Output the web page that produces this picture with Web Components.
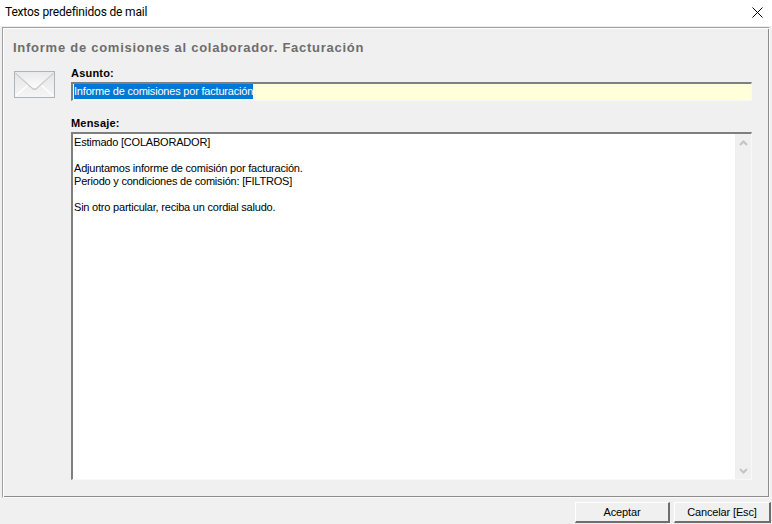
<!DOCTYPE html>
<html>
<head>
<meta charset="utf-8">
<title>Textos predefinidos de mail</title>
<style>
html, body { margin: 0; padding: 0; height: 100%; }
body { background: #f0f0f0; overflow: hidden; font-family: "Liberation Sans", Arial, sans-serif; }
</style>
</head>
<body>
<mail-dialog title-text="Textos predefinidos de mail">
    <mail-panel heading="Informe de comisiones al colaborador. Facturación">
        <mail-field label="Asunto:">
            <subject-input value="Informe de comisiones por facturación"></subject-input>
        </mail-field>
        <mail-field label="Mensaje:" grow>
            <message-box>Estimado [COLABORADOR]

Adjuntamos informe de comisión por facturación.
Periodo y condiciones de comisión: [FILTROS]

Sin otro particular, reciba un cordial saludo.</message-box>
        </mail-field>
    </mail-panel>
    <dlg-button slot="buttons" style="width:95px">Aceptar</dlg-button>
    <dlg-button slot="buttons" style="width:97px">Cancelar [Esc]</dlg-button>
</mail-dialog>
<script>
class MailDialog extends HTMLElement {
    constructor() {
        super();
        this.attachShadow({ mode: 'open' });
        this.shadowRoot.innerHTML = `
<style>
    :host { display: flex; flex-direction: column; width: 772px; height: 524px; background: #f0f0f0; }
    #titlebar {
        height: 26px; flex: none; background: #fff; display: flex; align-items: center;
        justify-content: space-between; padding: 0 9px 2px 5px; box-sizing: border-box;
        font: 12px Roboto, "Liberation Sans", sans-serif; letter-spacing: -.19px; color: #000;
    }
    #titlebar svg { display: block; }
    #body { flex: 1; display: flex; padding: 1px 2px 0 2px; min-height: 0; }
    #buttons { flex: none; height: 26px; display: flex; justify-content: flex-end; gap: 4px; padding: 0 1px 1px 0; align-items: flex-end; box-sizing: border-box; }
</style>
<div id="titlebar"><span></span>
    <svg width="11" height="11" viewBox="0 0 11 11"><path d="M.5.5l10 10M10.500.5l-10 10" stroke="#000" stroke-width="1" fill="none"/></svg>
</div>
<div id="body"><slot></slot></div>
<div id="buttons"><slot name="buttons"></slot></div>`;
    }
    connectedCallback() {
        this.shadowRoot.querySelector('#titlebar span').textContent = this.getAttribute('title-text');
    }
}
customElements.define('mail-dialog', MailDialog);

class MailPanel extends HTMLElement {
    constructor() {
        super();
        this.attachShadow({ mode: 'open' });
        this.shadowRoot.innerHTML = `
<style>
    :host {
        display: flex; flex-direction: column; flex: 1; min-width: 0; box-sizing: border-box;
        border: 1px solid #fafafa; border-top-color: #a0a0a0; border-left-color: #a0a0a0;
        box-shadow: inset 1px 1px 0 #fff, inset -1px -1px 0 #8c8c8c;
        padding: 12px 17px 17px 11px; background: #f0f0f0;
    }
    h1 { margin: 0 0 0 -1px; height: 18px; font: bold 13px/16px "Liberation Sans", sans-serif; letter-spacing: .74px; color: #6d6d6d; }
    #row { flex: 1; display: flex; min-height: 0; gap: 16px; margin-top: 9px; }
    svg { flex: none; display: block; margin-top: 4px; }
    #fields { flex: 1; display: flex; flex-direction: column; gap: 16px; min-width: 0; }
</style>
<h1></h1>
<div id="row">
    <svg width="41" height="27" viewBox="0 0 41 27">
        <defs>
            <linearGradient id="body" x1="0" y1="0" x2="0" y2="1"><stop offset="0" stop-color="#e6e6e6"/><stop offset="1" stop-color="#f5f5f5"/></linearGradient>
            <linearGradient id="flap" x1="0" y1="0" x2="0" y2="1"><stop offset="0" stop-color="#e9e9e9"/><stop offset="1" stop-color="#fcfcfc"/></linearGradient>
        </defs>
        <rect x=".5" y=".5" width="40" height="26" fill="url(#body)" stroke="#aeb4bb"/>
        <path d="M1.500 25L15 13M39.500 25L26 13" stroke="#fff" stroke-width="1.500" fill="none"/>
        <path d="M1.500 2L18 17Q20.500 19.500 23 17L39.500 2" stroke="#c9cccf" stroke-width="1.500" fill="none"/>
        <path d="M1 1L18 16Q20.500 18 23 16L40 1Z" fill="url(#flap)"/>
    </svg>
    <div id="fields"><slot></slot></div>
</div>`;
    }
    connectedCallback() {
        this.shadowRoot.querySelector('h1').textContent = this.getAttribute('heading');
    }
}
customElements.define('mail-panel', MailPanel);

class MailField extends HTMLElement {
    constructor() {
        super();
        this.attachShadow({ mode: 'open' });
        this.shadowRoot.innerHTML = `
<style>
    :host { display: flex; flex-direction: column; min-height: 0; }
    :host([grow]) { flex: 1; }
    label { height: 15px; flex: none; font: bold 11px/13px "Liberation Sans", sans-serif; color: #000; letter-spacing: .2px; }
</style>
<label></label>
<slot></slot>`;
    }
    connectedCallback() {
        this.shadowRoot.querySelector('label').textContent = this.getAttribute('label');
    }
}
customElements.define('mail-field', MailField);

class SubjectInput extends HTMLElement {
    constructor() {
        super();
        this.attachShadow({ mode: 'open' });
        this.shadowRoot.innerHTML = `
<style>
    :host {
        display: block; height: 19px; box-sizing: border-box; background: #ffffd9;
        border: 1px solid #f8f8f8; border-top: 2px solid #7f7f7f; border-left: 2px solid #7f7f7f;
        padding-left: 1px; font: 11px/15px "Liberation Sans", sans-serif; letter-spacing: -.2px;
    }
    span { display: inline-block; height: 15px; background: #0078d7; color: #fff; white-space: nowrap; }
</style>
<span></span>`;
    }
    connectedCallback() {
        this.shadowRoot.querySelector('span').textContent = this.getAttribute('value');
    }
}
customElements.define('subject-input', SubjectInput);

class MessageBox extends HTMLElement {
    constructor() {
        super();
        this.attachShadow({ mode: 'open' });
        this.shadowRoot.innerHTML = `
<style>
    :host {
        display: flex; flex: 1; min-height: 0; box-sizing: border-box; background: #fff;
        border: 1px solid #f8f8f8; border-top: 2px solid #7f7f7f; border-left: 2px solid #7f7f7f;
    }
    #text {
        flex: 1; padding: 2px 0 0 1px; white-space: pre-wrap; color: #000;
        font: 11px/13px "Liberation Sans", sans-serif; letter-spacing: -.21px;
    }
    #bar { flex: none; width: 16px; background: #f0f0f0; display: flex; flex-direction: column; justify-content: space-between; align-items: center; padding: 6px 0 5px; box-sizing: border-box; }
    svg { display: block; }
</style>
<div id="text"><slot></slot></div>
<div id="bar">
    <svg width="9" height="6" viewBox="0 0 9 6"><path d="M1 5L4.500 1.500L8 5" stroke="#c4c4c4" stroke-width="2" fill="none"/></svg>
    <svg width="9" height="6" viewBox="0 0 9 6"><path d="M1 1L4.500 4.500L8 1" stroke="#c4c4c4" stroke-width="2" fill="none"/></svg>
</div>`;
    }
}
customElements.define('message-box', MessageBox);

class DlgButton extends HTMLElement {
    constructor() {
        super();
        this.attachShadow({ mode: 'open' });
        this.shadowRoot.innerHTML = `
<style>
    :host {
        display: flex; align-items: center; justify-content: center; height: 21px; box-sizing: border-box;
        background: #f0f0f0; color: #000; border: 1px solid #fff; border-right: 2px solid #6e6e6e; border-bottom: 2px solid #6e6e6e;
        font: 11px "Liberation Sans", sans-serif; letter-spacing: -.15px;
    }
</style>
<slot></slot>`;
    }
}
customElements.define('dlg-button', DlgButton);
</script>
</body>
</html>
